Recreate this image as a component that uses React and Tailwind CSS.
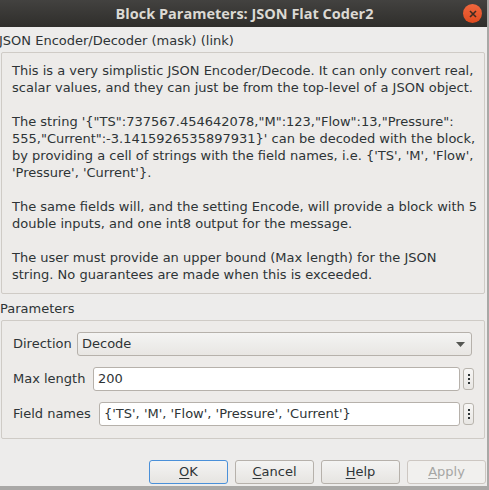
import React from 'react'

const font = { fontFamily: '"DejaVu Sans", sans-serif' }

const paragraphs = [
  [
    'This is a very simplistic JSON Encoder/Decode. It can only convert real,',
    'scalar values, and they can just be from the top-level of a JSON object.',
  ],
  [
    'The string \'{"TS":737567.454642078,"M":123,"Flow":13,"Pressure":',
    '555,"Current":-3.1415926535897931}\' can be decoded with the block,',
    "by providing a cell of strings with the field names, i.e. {'TS', 'M', 'Flow',",
    "'Pressure', 'Current'}.",
  ],
  [
    'The same fields will, and the setting Encode, will provide a block with 5',
    'double inputs, and one int8 output for the message.',
  ],
  [
    'The user must provide an upper bound (Max length) for the JSON',
    'string. No guarantees are made when this is exceeded.',
  ],
]

const MoreButton = () => (
  <button className="w-[11px] h-[22px] ml-[3px] rounded-[3px] border border-[#b9b5ae] bg-gradient-to-b from-[#f7f6f5] to-[#e8e6e3] flex flex-col items-center justify-center gap-[2px]">
    <span className="w-[2px] h-[2px] bg-[#2e3436]" />
    <span className="w-[2px] h-[2px] bg-[#2e3436]" />
    <span className="w-[2px] h-[2px] bg-[#2e3436]" />
  </button>
)

const DialogButton = ({ mnemonic, rest, primary, disabled }) => (
  <button
    className={`w-[79px] h-[24px] rounded-[3px] border text-[13px] ${
      primary
        ? 'border-[#4a90d9] bg-gradient-to-b from-[#f4f4f3] to-[#e6e4e1] text-[#2e3436]'
        : disabled
        ? 'border-[#cdc7c2] bg-[#f1f0ee] text-[#a6a6a4]'
        : 'border-[#b6b1ab] bg-gradient-to-b from-[#f4f4f3] to-[#e6e4e1] text-[#2e3436]'
    }`}
  >
    <span className="underline underline-offset-2">{mnemonic}</span>
    {rest}
  </button>
)

export default function App() {
  return (
    <div className="w-[489px] h-[490px] bg-[#a9a8a6] overflow-hidden" style={font}>
      <div className="w-[487px] h-[486px] bg-[#edeceb] flex flex-col">
        <div className="h-[27px] bg-gradient-to-b from-[#434240] to-[#2f2e2b] flex items-center relative">
          <div className="flex-1 text-center text-[14.5px] font-bold text-[#dcd9d3] pl-[2px]" style={{ fontFamily: '"Open Sans", "DejaVu Sans", sans-serif' }}>
            Block Parameters: JSON Flat Coder2
          </div>
          <div className="absolute right-[5px] top-[4px] w-[19px] h-[19px] rounded-full bg-gradient-to-b from-[#f0673d] to-[#df4a1e] flex items-center justify-center">
            <svg width="8" height="8" viewBox="0 0 8 8">
              <path d="M1 1L7 7M7 1L1 7" stroke="#3c2b22" strokeWidth="1.6" />
            </svg>
          </div>
        </div>

        <div className="text-[13px] text-[#2e3436] leading-[17px] mt-[5px] -ml-[1px]">
          JSON Encoder/Decoder (mask) (link)
        </div>

        <div className="mt-[3px] ml-[1px] w-[484px] border border-[#cfcbc6] rounded-[2px] bg-[#edebe9] pl-[10px] pt-[9px] pb-[10px] text-[13px] leading-[17px] text-[#2e3436] flex flex-col gap-[17px]">
          {paragraphs.map((p, i) => (
            <div key={i}>
              {p.map((line, j) => (
                <div key={j} className="whitespace-pre">{line}</div>
              ))}
            </div>
          ))}
        </div>

        <div className="text-[13px] text-[#2e3436] leading-[17px] mt-[6px]">Parameters</div>

        <div className="mt-[3px] ml-[1px] w-[484px] h-[119px] border border-[#cfcbc6] rounded-[2px] bg-[#edebe9] px-[10px] pt-[11px] flex flex-col gap-[11px] text-[13px] text-[#2e3436]">
          <div className="flex items-center">
            <span className="w-[65px] pl-[1px]">Direction</span>
            <div className="flex-1 mr-[2px] h-[24px] rounded-[3px] border border-[#b6b1ab] bg-gradient-to-b from-[#f4f4f3] to-[#e8e6e3] flex items-center px-[4px]">
              <span className="flex-1">Decode</span>
              <svg width="9" height="5" viewBox="0 0 9 5" className="mr-[2px]">
                <path d="M0 0H9L4.5 5Z" fill="#555753" />
              </svg>
            </div>
          </div>
          <div className="flex items-center">
            <span className="w-[81px] pl-[1px]">Max length</span>
            <div className="flex-1 h-[24px] rounded-[3px] border border-[#b6b1ab] bg-white flex items-center px-[4px]">200</div>
            <MoreButton />
          </div>
          <div className="flex items-center">
            <span className="w-[87px] pl-[1px]">Field names</span>
            <div className="flex-1 h-[24px] rounded-[3px] border border-[#b6b1ab] bg-white flex items-center px-[4px] whitespace-pre">
              {"{'TS', 'M', 'Flow', 'Pressure', 'Current'}"}
            </div>
            <MoreButton />
          </div>
        </div>

        <div className="mt-auto mb-[2px] flex justify-end gap-[7px] pr-[1px]">
          <DialogButton mnemonic="O" rest="K" primary />
          <DialogButton mnemonic="C" rest="ancel" />
          <DialogButton mnemonic="H" rest="elp" />
          <DialogButton mnemonic="A" rest="pply" disabled />
        </div>
      </div>
    </div>
  )
}
